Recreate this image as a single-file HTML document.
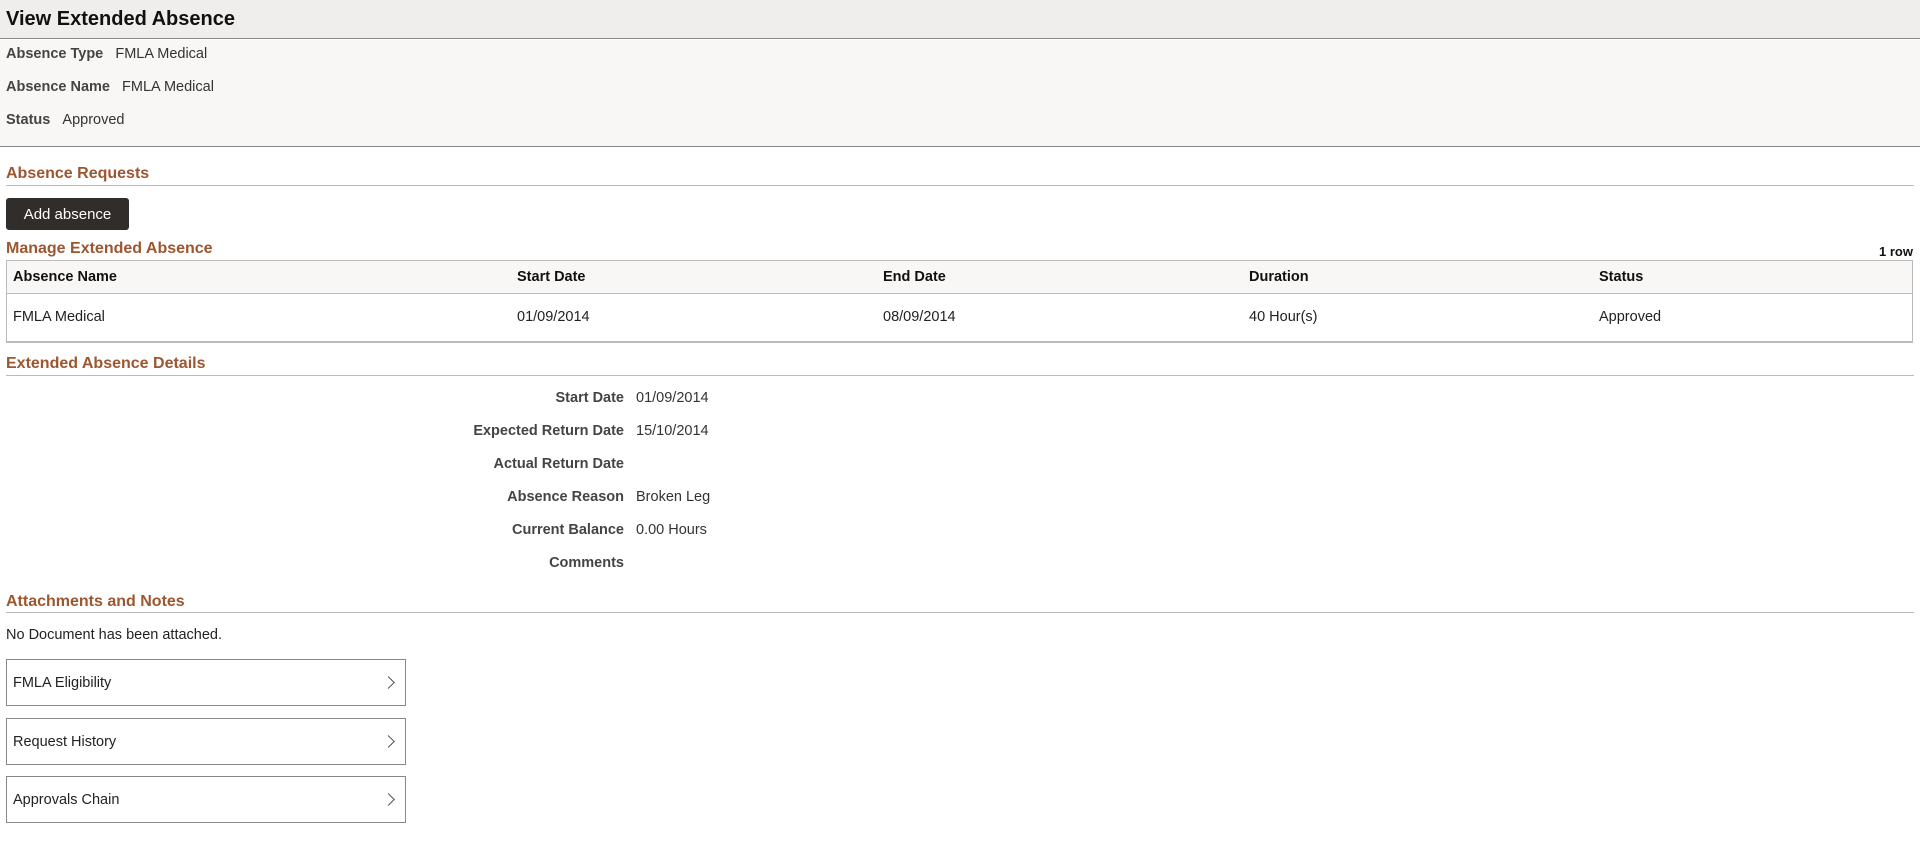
<!DOCTYPE html>
<html><head><meta charset="utf-8"><style>
*{margin:0;padding:0;box-sizing:border-box}
body{width:1920px;height:846px;background:#fff;font-family:"Liberation Sans",Arial,sans-serif;color:#333;font-size:14.5px;position:relative;overflow:hidden}
.a{position:absolute;white-space:nowrap}
.hdr{position:absolute;left:0;top:0;width:1920px;height:39px;background:#efeeed;border-bottom:1px solid #888}
.info{position:absolute;left:0;top:40px;width:1920px;height:107px;background:#f8f7f6;border-bottom:1px solid #888}
.lbl{font-weight:bold;color:#444}
.h{position:absolute;left:6px;font-weight:bold;color:#9c5630;font-size:16px}
.line{position:absolute;left:6px;width:1908px;height:1px;background:#bbb}
.box{position:absolute;left:6px;width:400px;height:47px;border:1px solid #888;background:#fff}
.box span{position:absolute;left:6px;top:15px;color:#222}
.box i{position:absolute;right:12px;top:18px;width:9px;height:9px;border-right:1.5px solid #555;border-top:1.5px solid #555;transform:rotate(45deg)}
</style></head><body>
<div class="hdr"><div class="a" style="left:6px;top:8px;font-size:20px;font-weight:bold;color:#111">View Extended Absence</div></div>
<div class="info"></div>
<div class="a" style="left:6px;top:46px"><span class="lbl">Absence Type</span>&nbsp;&nbsp;&nbsp;FMLA Medical</div>
<div class="a" style="left:6px;top:79px"><span class="lbl">Absence Name</span>&nbsp;&nbsp;&nbsp;FMLA Medical</div>
<div class="a" style="left:6px;top:112px"><span class="lbl">Status</span>&nbsp;&nbsp;&nbsp;Approved</div>
<div class="h" style="top:165px">Absence Requests</div><div class="line" style="top:185px"></div>
<div class="a" style="left:6px;top:198px;width:123px;height:32px;background:#312d2a;border-radius:3px;color:#fff;font-size:15px;text-align:center;line-height:33px">Add absence</div>
<div class="h" style="top:240px">Manage Extended Absence</div>
<div class="a" style="right:7px;top:244px;font-size:13px;font-weight:bold;color:#111">1 row</div>
<div class="a" style="left:6px;top:260px;width:1907px;height:83px;border:1px solid #bbb;border-bottom:2px solid #bbb"></div>
<div class="a" style="left:7px;top:261px;width:1905px;height:33px;background:#f8f7f6;border-bottom:1px solid #bbb"></div>
<div class="a lbl" style="left:13px;top:269px;color:#111">Absence Name</div>
<div class="a lbl" style="left:517px;top:269px;color:#111">Start Date</div>
<div class="a lbl" style="left:883px;top:269px;color:#111">End Date</div>
<div class="a lbl" style="left:1249px;top:269px;color:#111">Duration</div>
<div class="a lbl" style="left:1599px;top:269px;color:#111">Status</div>
<div class="a" style="left:13px;top:309px;color:#222">FMLA Medical</div>
<div class="a" style="left:517px;top:309px;color:#222">01/09/2014</div>
<div class="a" style="left:883px;top:309px;color:#222">08/09/2014</div>
<div class="a" style="left:1249px;top:309px;color:#222">40 Hour(s)</div>
<div class="a" style="left:1599px;top:309px;color:#222">Approved</div>
<div class="h" style="top:355px">Extended Absence Details</div><div class="line" style="top:375px"></div>
<div class="a lbl" style="right:1296px;top:390px">Start Date</div><div class="a" style="left:636px;top:390px">01/09/2014</div>
<div class="a lbl" style="right:1296px;top:423px">Expected Return Date</div><div class="a" style="left:636px;top:423px">15/10/2014</div>
<div class="a lbl" style="right:1296px;top:456px">Actual Return Date</div>
<div class="a lbl" style="right:1296px;top:489px">Absence Reason</div><div class="a" style="left:636px;top:489px">Broken Leg</div>
<div class="a lbl" style="right:1296px;top:522px">Current Balance</div><div class="a" style="left:636px;top:522px">0.00 Hours</div>
<div class="a lbl" style="right:1296px;top:555px">Comments</div>
<div class="h" style="top:593px">Attachments and Notes</div><div class="line" style="top:612px"></div>
<div class="a" style="left:6px;top:627px;color:#222">No Document has been attached.</div>
<div class="box" style="top:659px"><span>FMLA Eligibility</span><i></i></div>
<div class="box" style="top:718px"><span>Request History</span><i></i></div>
<div class="box" style="top:776px"><span>Approvals Chain</span><i></i></div>
</body></html>
